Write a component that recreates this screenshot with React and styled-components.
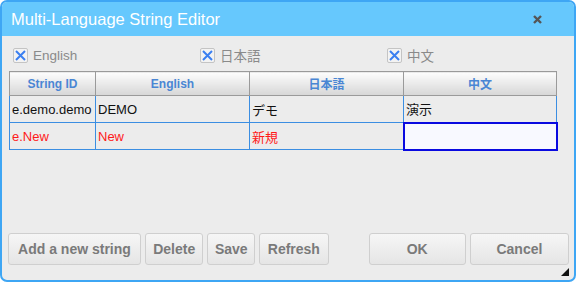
import React from "react";
import styled, { createGlobalStyle } from "styled-components";

const GlobalStyle = createGlobalStyle`
  html, body {
    margin: 0;
    padding: 0;
    background: #ffffff;
  }
  * {
    box-sizing: border-box;
  }
`;

const Window = styled.div`
  width: 576px;
  height: 282px;
  display: flex;
  flex-direction: column;
  border: 2px solid #3ea6f4;
  border-radius: 7px;
  background: #ececec;
  overflow: hidden;
  position: relative;
  font-family: "Liberation Sans", Arial, sans-serif;
`;

const TitleBar = styled.div`
  height: 34px;
  flex: none;
  display: flex;
  align-items: center;
  justify-content: space-between;
  padding: 0 32px 0 9px;
  background: #66c8fd;
`;

const Title = styled.div`
  color: #ffffff;
  font-family: "Liberation Sans", Arial, sans-serif;
  font-size: 16.5px;
`;

const Close = styled.div`
  display: flex;
  align-items: center;
`;

const Options = styled.div`
  display: grid;
  grid-template-columns: 187px 187px 1fr;
  padding: 11px 0 0 11px;
  height: 35px;
  flex: none;
`;

const Option = styled.label`
  display: flex;
  align-items: center;
  gap: 5px;
  height: 16px;
  color: #8a8a8a;
  font-size: 13.5px;
  font-family: "Liberation Sans", "Noto Sans CJK JP", sans-serif;
`;

const Box = styled.span`
  width: 15px;
  height: 15px;
  border: 1px solid #c4c4c4;
  border-radius: 2px;
  background: #f3f3f3;
  display: flex;
  align-items: center;
  justify-content: center;
`;

const Table = styled.table`
  margin-left: 7px;
  border-collapse: collapse;
  table-layout: fixed;
  width: 547px;
  font-size: 13px;
  font-family: "Liberation Sans", "Noto Sans CJK JP", sans-serif;
`;

const Head = styled.th`
  height: 24px;
  padding: 0;
  border: 1px solid #9a9a9a;
  background: linear-gradient(#fdfdfd, #d6d6d6);
  color: #4a86d4;
  font-weight: bold;
  font-size: 12px;
  text-align: center;
`;

const Cell = styled.td`
  height: 27px;
  padding: 0 2px;
  border: 1px solid #3b8ee2;
  color: ${(p) => (p.$new ? "#ff1a1a" : "#111111")};
  white-space: nowrap;
  overflow: hidden;
`;

const EditCell = styled.td`
  height: 27px;
  padding: 0;
  border: 2px solid #0a0ae0;
  background: #f8f9ff;
`;

const Spacer = styled.div`
  flex: 1;
`;

const Footer = styled.div`
  display: flex;
  align-items: center;
  gap: 4px;
  padding: 0 5px 15px 6px;
  flex: none;
`;

const Button = styled.button`
  height: 32px;
  width: ${(p) => p.$w}px;
  padding: 0;
  border: 1px solid #cfcfcf;
  border-radius: 3px;
  background: linear-gradient(#f6f6f6, #e5e5e5);
  color: #7a7a7a;
  font-family: "Liberation Sans", Arial, sans-serif;
  font-weight: bold;
  font-size: 14px;
  margin-left: ${(p) => p.$push || 0}px;
`;

const Grip = styled.div`
  position: absolute;
  right: 5px;
  bottom: 4px;
  width: 0;
  height: 0;
  border-left: 8px solid transparent;
  border-bottom: 8px solid #111111;
`;

function Check() {
  return (
    <Box>
      <svg width="13" height="13" viewBox="0 0 13 13">
        <path d="M2 2 L11 11 M11 2 L2 11" stroke="#3b7ff0" strokeWidth="2" fill="none" />
      </svg>
    </Box>
  );
}

export default function App() {
  return (
    <>
      <GlobalStyle />
      <Window>
        <TitleBar>
          <Title>Multi-Language String Editor</Title>
          <Close>
            <svg width="9" height="9" viewBox="0 0 9 9">
              <path d="M1 1 L8 8 M8 1 L1 8" stroke="#555555" strokeWidth="2.4" fill="none" />
            </svg>
          </Close>
        </TitleBar>
        <Options>
          <Option><Check />English</Option>
          <Option><Check />日本語</Option>
          <Option><Check />中文</Option>
        </Options>
        <Table>
          <colgroup>
            <col style={{ width: 86 }} />
            <col style={{ width: 154 }} />
            <col style={{ width: 154 }} />
            <col style={{ width: 153 }} />
          </colgroup>
          <thead>
            <tr>
              <Head>String ID</Head>
              <Head>English</Head>
              <Head>日本語</Head>
              <Head>中文</Head>
            </tr>
          </thead>
          <tbody>
            <tr>
              <Cell>e.demo.demo</Cell>
              <Cell>DEMO</Cell>
              <Cell>デモ</Cell>
              <Cell>演示</Cell>
            </tr>
            <tr>
              <Cell $new>e.New</Cell>
              <Cell $new>New</Cell>
              <Cell $new>新規</Cell>
              <EditCell />
            </tr>
          </tbody>
        </Table>
        <Spacer />
        <Footer>
          <Button $w={134}>Add a new string</Button>
          <Button $w={59}>Delete</Button>
          <Button $w={48}>Save</Button>
          <Button $w={70}>Refresh</Button>
          <Button $w={98} $push={36}>OK</Button>
          <Button $w={100}>Cancel</Button>
        </Footer>
        <Grip />
      </Window>
    </>
  );
}
